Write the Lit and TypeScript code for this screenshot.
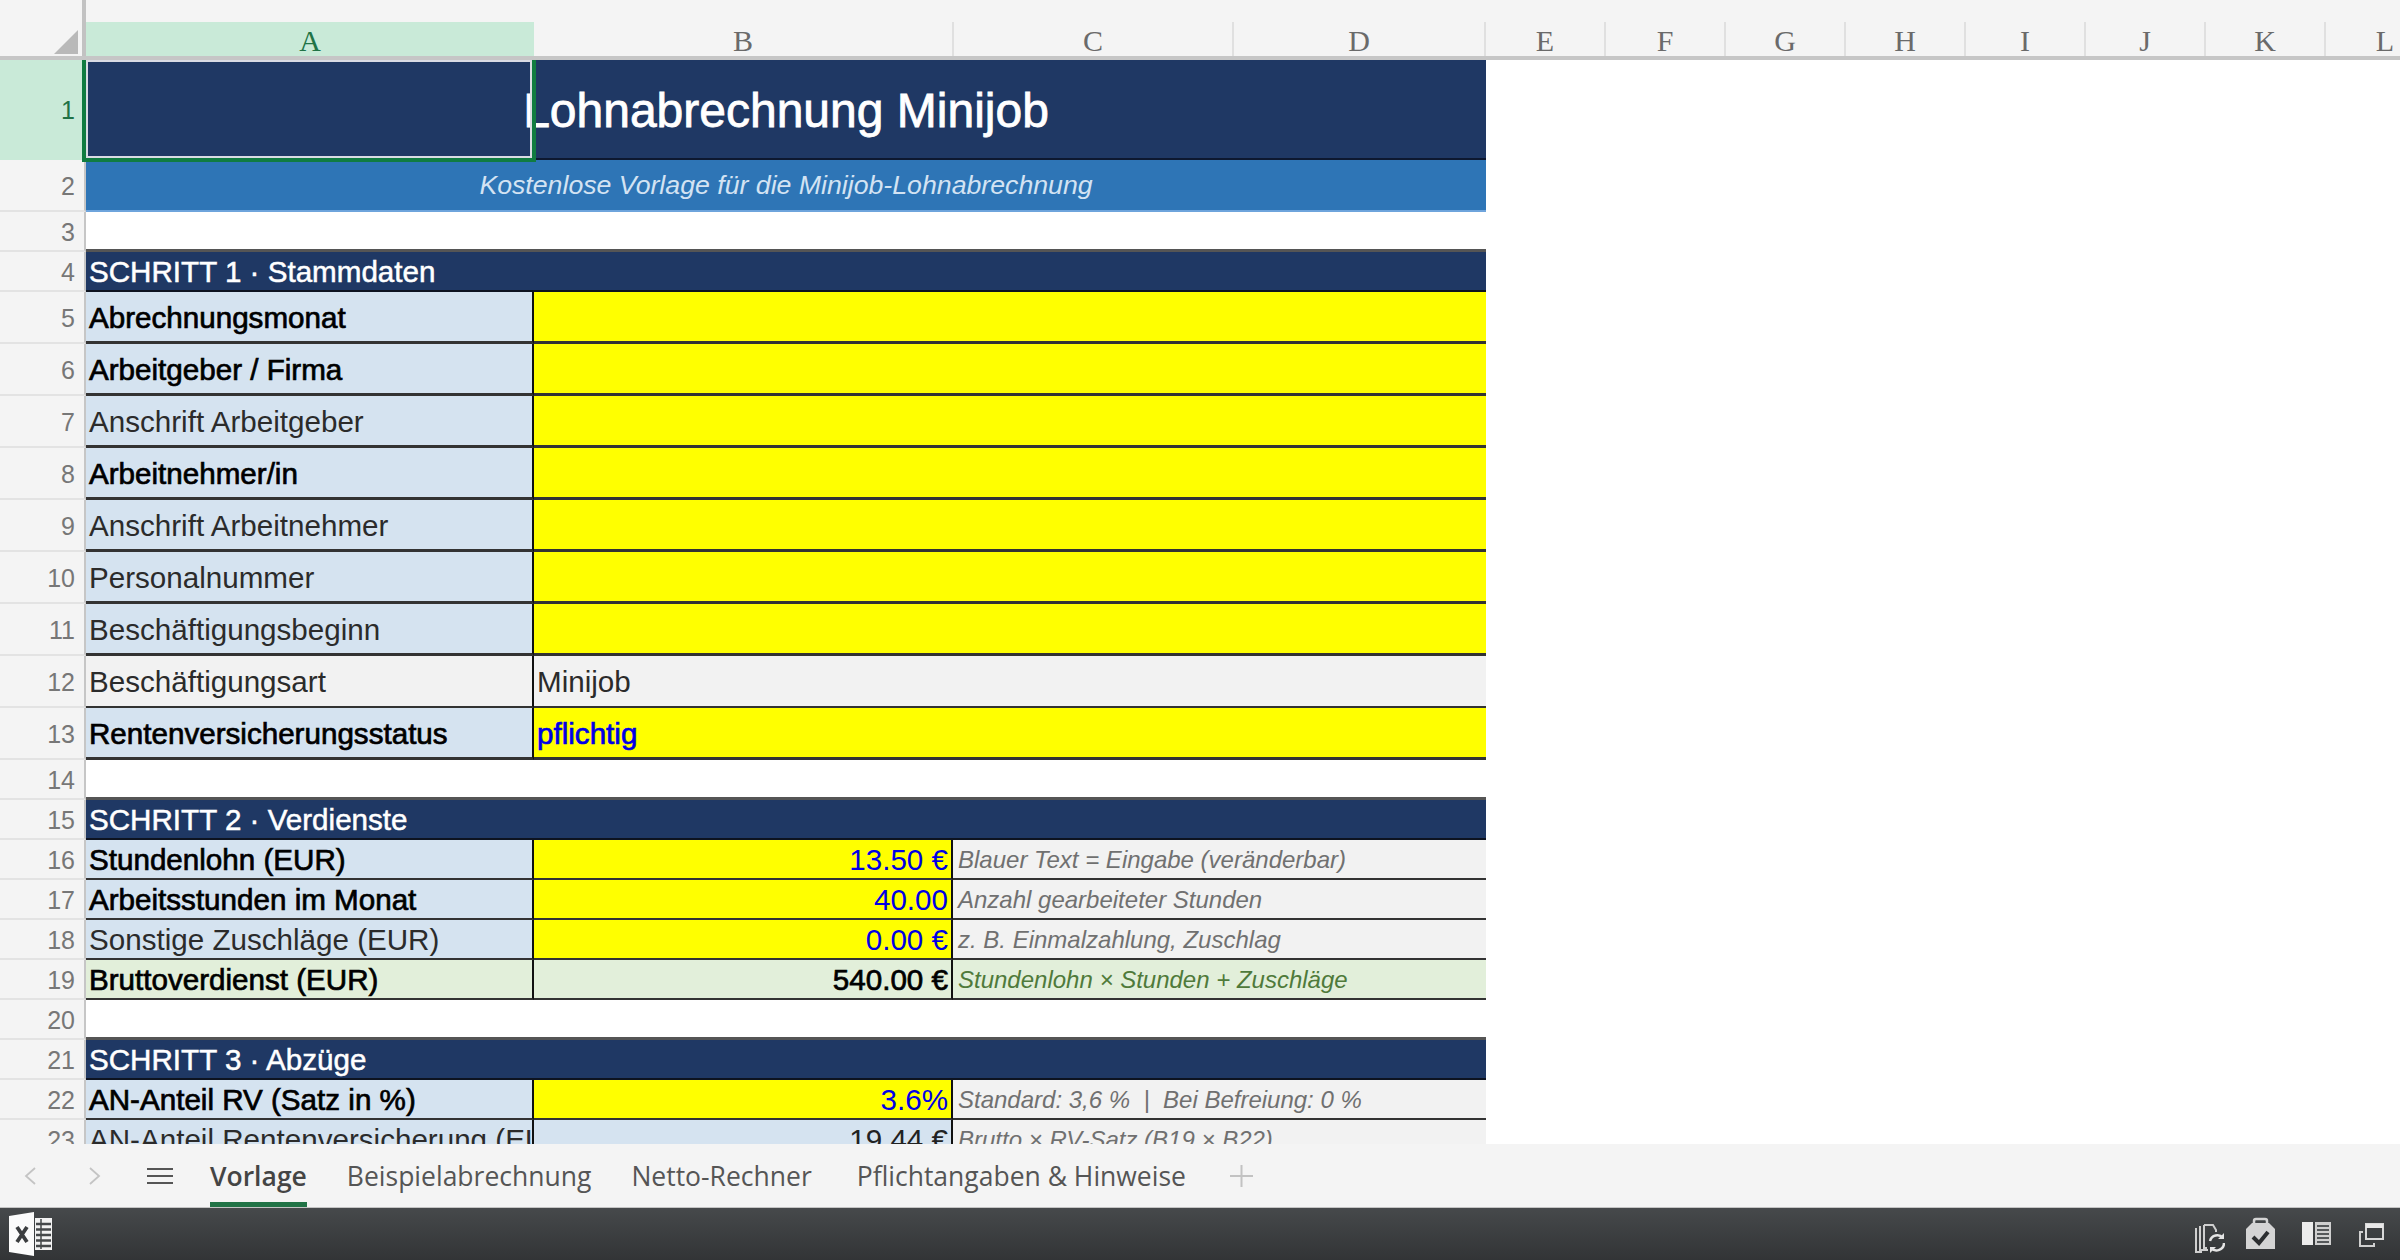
import { LitElement, html, css } from "lit";
import { customElement } from "lit/decorators.js";

type Row = { n: number; kind: string; a?: string; b?: string; c?: string; bold?: boolean; cls?: string };

const rowsData: Row[] = [
  { n: 1, kind: "title", a: "Lohnabrechnung Minijob" },
  { n: 2, kind: "sub", a: "Kostenlose Vorlage für die Minijob-Lohnabrechnung" },
  { n: 3, kind: "blank" },
  { n: 4, kind: "sec", a: "SCHRITT 1 · Stammdaten" },
  { n: 5, kind: "tall", a: "Abrechnungsmonat", bold: true },
  { n: 6, kind: "tall", a: "Arbeitgeber / Firma", bold: true },
  { n: 7, kind: "tall", a: "Anschrift Arbeitgeber" },
  { n: 8, kind: "tall", a: "Arbeitnehmer/in", bold: true },
  { n: 9, kind: "tall", a: "Anschrift Arbeitnehmer" },
  { n: 10, kind: "tall", a: "Personalnummer" },
  { n: 11, kind: "tall", a: "Beschäftigungsbeginn" },
  { n: 12, kind: "fixed", a: "Beschäftigungsart", b: "Minijob" },
  { n: 13, kind: "tall", a: "Rentenversicherungsstatus", b: "pflichtig", bold: true },
  { n: 14, kind: "blank" },
  { n: 15, kind: "sec", a: "SCHRITT 2 · Verdienste" },
  { n: 16, kind: "data", a: "Stundenlohn (EUR)", b: "13.50 €", c: "Blauer Text = Eingabe (veränderbar)", bold: true, cls: "input" },
  { n: 17, kind: "data", a: "Arbeitsstunden im Monat", b: "40.00", c: "Anzahl gearbeiteter Stunden", bold: true, cls: "input" },
  { n: 18, kind: "data", a: "Sonstige Zuschläge (EUR)", b: "0.00 €", c: "z. B. Einmalzahlung, Zuschlag", cls: "input" },
  { n: 19, kind: "data", a: "Bruttoverdienst (EUR)", b: "540.00 €", c: "Stundenlohn × Stunden + Zuschläge", bold: true, cls: "total" },
  { n: 20, kind: "blank" },
  { n: 21, kind: "sec", a: "SCHRITT 3 · Abzüge" },
  { n: 22, kind: "data", a: "AN-Anteil RV (Satz in %)", b: "3.6%", c: "Standard: 3,6 %  |  Bei Befreiung: 0 %", bold: true, cls: "input" },
  { n: 23, kind: "data", a: "AN-Anteil Rentenversicherung (EUR)", b: "19.44 €", c: "Brutto × RV-Satz (B19 × B22)", cls: "calc" },
];

const columns = ["A", "B", "C", "D", "E", "F", "G", "H", "I", "J", "K", "L"];

@customElement("app-root")
export class AppRoot extends LitElement {
  static styles = css`
    :host {
      display: flex;
      flex-direction: column;
      width: 2400px;
      height: 1260px;
      overflow: hidden;
      background: #fff;
      font-family: "Liberation Sans", Arial, sans-serif;
      color: #1a1a1a;
    }
    .head {
      flex: none;
      display: grid;
      grid-template-columns: 86px 448px 420px 280px 252px repeat(8, 120px);
      height: 60px;
      background: #f4f4f4;
      border-bottom: 4px solid #c6c6c6;
      box-sizing: border-box;
      overflow: hidden;
    }
    .corner {
      border-right: 4px solid #c2c2c2;
      display: flex;
      justify-content: flex-end;
      align-items: flex-end;
      padding: 0 4px 4px 0;
    }
    .tri {
      width: 24px;
      height: 24px;
      background: #b9b9b9;
      clip-path: polygon(100% 0, 100% 100%, 0 100%);
    }
    .col {
      margin-top: 22px;
      padding-top: 2px;
      display: flex;
      align-items: center;
      justify-content: center;
      font-family: "Liberation Serif", "Times New Roman", serif;
      font-size: 30px;
      color: #6a6a6a;
      border-right: 2px solid #e0e0e0;
      min-width: 0;
    }
    .col.active {
      background: #c9ead8;
      color: #217346;
      border-right: none;
    }
    .sheet {
      flex: none;
      height: 1084px;
      overflow: hidden;
      position: relative;
    }
    .row {
      display: grid;
      grid-template-columns: 86px 448px 419px 281px 252px 1fr;
    }
    .h100 { height: 100px; }
    .h52 { height: 52px; }
    .h40 { height: 40px; }
    .num {
      box-sizing: border-box;
      background: #f4f4f4;
      border-right: 2px solid #c6c6c6;
      border-bottom: 2px solid #e3e3e3;
      display: flex;
      align-items: center;
      justify-content: flex-end;
      padding: 2px 9px 0 0;
      font-size: 25px;
      color: #777;
    }
    .num.active {
      background: #c9ead8;
      color: #217346;
      border-bottom-color: #c9ead8;
    }
    .cell {
      box-sizing: border-box;
      display: flex;
      align-items: center;
      min-width: 0;
      overflow: hidden;
      white-space: pre;
      padding: 1px 3px 0;
      font-size: 29.6px;
      border-bottom: 2px solid #333;
    }
    .tall .cell { border-bottom-width: 3px; padding-top: 3px; }
    .span4 { grid-column: span 4; }
    .span3 { grid-column: span 3; }
    .span2 { grid-column: span 2; }
    .divider { border-right: 2px solid #111; }
    .right { justify-content: flex-end; }
    .bold { -webkit-text-stroke: 0.7px currentColor; color: #000; }
    .label { background: #d5e3f0; color: #2b2b2b; }
    .label.bold { color: #000; }
    .yellow { background: #ffff00; }
    .yellow.bold { color: #0000e6; }
    .blue-text { color: #0000e6; }
    .grey { background: #f2f2f2; color: #2b2b2b; }
    .green { background: #e2efda; }
    .calc { background: #d5e3f0; color: #222; }
    .titlecell {
      background: #1f3864;
      color: #fff;
      font-size: 48px;
      -webkit-text-stroke: 0.8px #fff;
      justify-content: center;
      padding-top: 3px;
      border-bottom: 2px solid #0d1830;
      overflow: visible;
    }
    .subcell {
      background: #2e75b6;
      color: #d3e3f3;
      font-size: 26.7px;
      font-style: italic;
      justify-content: center;
      border-bottom: 2px solid #6ea4dc;
    }
    .seccell {
      background: #1f3864;
      color: #fff;
      -webkit-text-stroke: 0.5px #fff;
      border-bottom: 2px solid #0d1320;
    }
    .blankcell {
      background: #fff;
      border-bottom: 3px solid #555;
    }
    .note {
      font-style: italic;
      font-size: 24px;
      color: #707070;
      background: #f2f2f2;
      padding-left: 5px;
    }
    .note.ok {
      background: #e2efda;
      color: #4f7a3a;
    }
    .selection {
      position: absolute;
      left: 82px;
      top: -4px;
      width: 454px;
      height: 106px;
      box-sizing: border-box;
      border: 4px solid #107c41;
      box-shadow: inset 0 0 0 2px #d9dbe4;
      pointer-events: none;
    }
    .tabs {
      flex: none;
      box-sizing: border-box;
      height: 64px;
      background: #f4f4f4;
      border-bottom: 1px solid #c4c4c4;
      display: flex;
      align-items: center;
      padding-left: 24px;
      font-family: "Open Sans", "Noto Sans", sans-serif;
      font-size: 26.5px;
      color: #555;
    }
    .tabs svg { flex: none; display: block; }
    .fwd { margin-left: 51px; }
    .menu { margin-left: 46px; }
    .tab { margin-left: 40px; white-space: nowrap; }
    .tab.first { margin-left: 37px; }
    .tab.third { margin-left: 45px; }
    .tab.on {
      position: relative;
      font-weight: 600;
      color: #444;
      align-self: stretch;
      display: flex;
      align-items: center;
    }
    .tab.on::after {
      content: "";
      position: absolute;
      left: 0;
      right: 0;
      bottom: 0;
      height: 5px;
      background: #217346;
    }
    .plus { margin-left: 44px; }
    .status {
      flex: none;
      height: 52px;
      background: linear-gradient(#46494b, #323436);
      display: flex;
      padding-right: 16px;
    }
    .status svg { flex: none; display: block; }
    .xl { margin-right: auto; }
    .s2 { margin-left: 21px; }
    .s3 { margin-left: 27px; }
    .s4 { margin-left: 28px; }
  `;

  private chevron(flip: boolean, cls: string) {
    const d = flip ? "M2 1l9 8-9 8" : "M11 1L2 9l9 8";
    return html`<svg class=${cls} width="13" height="18" viewBox="0 0 13 18" fill="none" stroke="#c4c4c4" stroke-width="1.8"><path d=${d}/></svg>`;
  }

  private renderCells(r: Row) {
    switch (r.kind) {
      case "title":
        return html`<div class="cell titlecell span4">${r.a}</div>`;
      case "sub":
        return html`<div class="cell subcell span4">${r.a}</div>`;
      case "blank":
        return html`<div class="cell blankcell span4"></div>`;
      case "sec":
        return html`<div class="cell seccell span4">${r.a}</div>`;
      case "tall":
        return html`
          <div class="cell label divider ${r.bold ? "bold" : ""}">${r.a}</div>
          <div class="cell yellow span3 bold">${r.b ?? ""}</div>`;
      case "fixed":
        return html`
          <div class="cell grey divider">${r.a}</div>
          <div class="cell grey span3">${r.b}</div>`;
      default: {
        const aBg = r.cls === "total" ? "green" : "label";
        const bCls = r.cls === "input" ? "yellow blue-text" : r.cls === "total" ? "green bold" : "calc";
        return html`
          <div class="cell ${aBg} divider ${r.bold ? "bold" : ""}">${r.a}</div>
          <div class="cell ${bCls} divider right">${r.b}</div>
          <div class="cell note span2 ${r.cls === "total" ? "ok" : ""}">${r.c}</div>`;
      }
    }
  }

  render() {
    return html`
      <div class="head">
        <div class="corner"><div class="tri"></div></div>
        ${columns.map((c, i) => html`<div class="col ${i === 0 ? "active" : ""}">${c}</div>`)}
      </div>
      <div class="sheet">
        ${rowsData.map((r) => {
          const h = r.kind === "title" ? "h100" : r.kind === "tall" || r.kind === "fixed" || r.kind === "sub" ? "h52" : "h40";
          return html`<div class="row ${h} ${r.kind}">
            <div class="num ${r.n === 1 ? "active" : ""}">${r.n}</div>
            ${this.renderCells(r)}
          </div>`;
        })}
        <div class="selection"></div>
      </div>
      <div class="tabs">
        ${this.chevron(false, "")}
        ${this.chevron(true, "fwd")}
        <svg class="menu" width="26" height="18" viewBox="0 0 26 18" fill="none" stroke="#555" stroke-width="2.2"><path d="M0 2h26M0 9h26M0 16h26"/></svg>
        <div class="tab first on">Vorlage</div>
        <div class="tab">Beispielabrechnung</div>
        <div class="tab">Netto-Rechner</div>
        <div class="tab third">Pflichtangaben &amp; Hinweise</div>
        <svg class="plus" width="23" height="22" viewBox="0 0 23 22" fill="none" stroke="#c2c2c2" stroke-width="2"><path d="M11.5 0v22M0 11h23"/></svg>
      </div>
      <div class="status">
        <svg class="xl" width="60" height="52" viewBox="0 0 60 52">
          <rect x="35" y="10" width="17" height="32" fill="#f2f2f2"/>
          <path d="M36 16h15M36 21.500h15M36 27h15M36 32.500h15M36 38h15" stroke="#45484a" stroke-width="2.400"/>
          <path d="M41 11v30" stroke="#45484a" stroke-width="1.500"/>
          <path d="M9 8l25-4v44l-25-4z" fill="#fbfbfb"/>
          <path d="M17 19l10 15M27 19L17 34" stroke="#3c3e40" stroke-width="3.800" fill="none"/>
        </svg>
        <svg width="30" height="52" viewBox="0 0 30 52" fill="none" stroke="#cfcfcf" stroke-width="2">
          <path d="M1 20v24h6"/>
          <path d="M5 18v24h8"/>
          <path d="M9 17h9l3 5v2M9 17v23h3"/>
          <path d="M15 33a7.500 7.500 0 0 1 13-3M29 35a7.500 7.500 0 0 1-13 5" stroke-width="2.500" stroke="#e4e4e4"/>
          <path d="M29 25v6h-6zM15 45v-6h6z" fill="#e4e4e4" stroke="none"/>
        </svg>
        <svg class="s2" width="29" height="52" viewBox="0 0 29 52">
          <path d="M0 21l6-6h17l6 6v20H0z" fill="#d4d4d4"/>
          <path d="M8 20v-7a2 2 0 0 1 2-2h9a2 2 0 0 1 2 2v7" fill="none" stroke="#d4d4d4" stroke-width="2.500"/>
          <path d="M7 29l6 6 9-11" fill="none" stroke="#2c2e30" stroke-width="4"/>
        </svg>
        <svg class="s3" width="29" height="52" viewBox="0 0 29 52">
          <rect x="0" y="14" width="11" height="23" fill="#ececec"/>
          <rect x="13" y="14" width="16" height="23" fill="#cfcfcf"/>
          <path d="M15 18h12M15 22h12M15 26h12M15 30h12M15 34h12" stroke="#55585a" stroke-width="1.800"/>
        </svg>
        <svg class="s4" width="25" height="52" viewBox="0 0 25 52" fill="none">
          <rect x="7" y="16" width="17" height="15" stroke="#d8d8d8" stroke-width="2"/>
          <path d="M7 18h17" stroke="#e8e8e8" stroke-width="4"/>
          <path d="M4 24H1v14h14v-3" stroke="#d0d0d0" stroke-width="2"/>
        </svg>
      </div>
    `;
  }
}
